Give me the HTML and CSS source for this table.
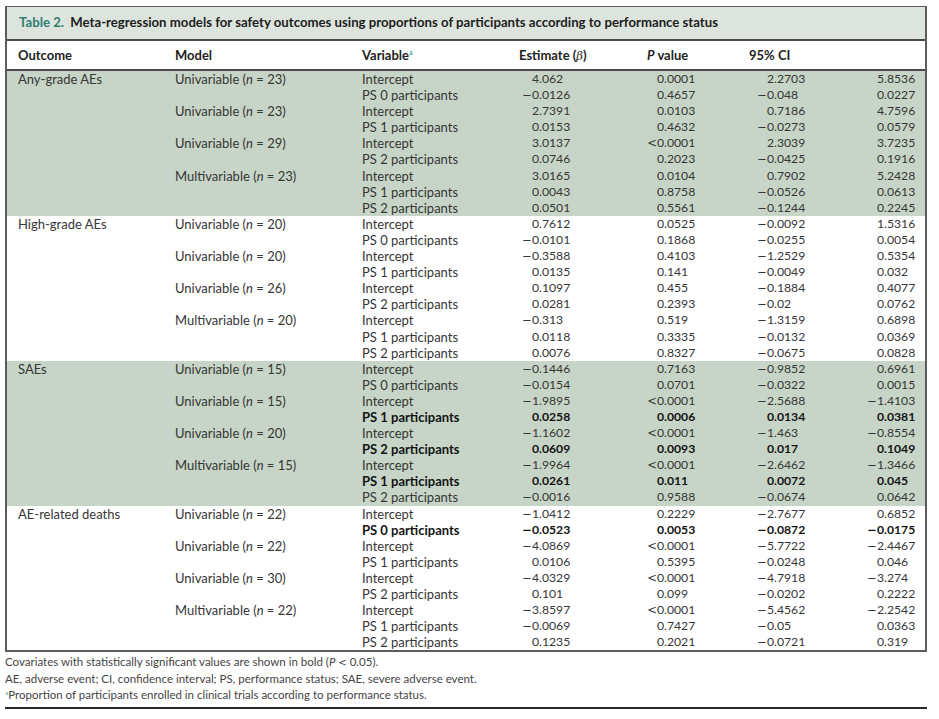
FILE: index.html
```html
<!DOCTYPE html>
<html>
<head>
<meta charset="utf-8">
<link rel="stylesheet" href="styles.css">
</head>
<body>
<div class="page">
  <div class="box">
    <div class="caption"><span class="lbl">Table 2.</span>&nbsp; Meta-regression models for safety outcomes using proportions of participants according to performance status</div>
    <table class="tbl">
      <colgroup>
        <col class="c1"><col class="c2"><col class="c3"><col class="c4"><col class="c5"><col class="c6"><col class="c7">
      </colgroup>
      <thead>
        <tr><th class="o">Outcome</th><th>Model</th><th>Variable<sup>a</sup></th><th>Estimate (<i class="beta">β</i>)</th><th><i>P</i> value</th><th>95% CI</th><th></th></tr>
      </thead>
      <tbody class="g">
        <tr><td class="o">Any-grade AEs</td><td>Univariable (<i>n</i> = 23)</td><td>Intercept</td><td class="e">4.062</td><td class="p">0.0001</td><td class="l">2.2703</td><td class="u">5.8536</td></tr>
        <tr><td></td><td></td><td>PS 0 participants</td><td class="e"><s>−</s>0.0126</td><td class="p">0.4657</td><td class="l"><s>−</s>0.048</td><td class="u">0.0227</td></tr>
        <tr><td></td><td>Univariable (<i>n</i> = 23)</td><td>Intercept</td><td class="e">2.7391</td><td class="p">0.0103</td><td class="l">0.7186</td><td class="u">4.7596</td></tr>
        <tr><td></td><td></td><td>PS 1 participants</td><td class="e">0.0153</td><td class="p">0.4632</td><td class="l"><s>−</s>0.0273</td><td class="u">0.0579</td></tr>
        <tr><td></td><td>Univariable (<i>n</i> = 29)</td><td>Intercept</td><td class="e">3.0137</td><td class="p"><s>&lt;</s>0.0001</td><td class="l">2.3039</td><td class="u">3.7235</td></tr>
        <tr><td></td><td></td><td>PS 2 participants</td><td class="e">0.0746</td><td class="p">0.2023</td><td class="l"><s>−</s>0.0425</td><td class="u">0.1916</td></tr>
        <tr><td></td><td>Multivariable (<i>n</i> = 23)</td><td>Intercept</td><td class="e">3.0165</td><td class="p">0.0104</td><td class="l">0.7902</td><td class="u">5.2428</td></tr>
        <tr><td></td><td></td><td>PS 1 participants</td><td class="e">0.0043</td><td class="p">0.8758</td><td class="l"><s>−</s>0.0526</td><td class="u">0.0613</td></tr>
        <tr><td></td><td></td><td>PS 2 participants</td><td class="e">0.0501</td><td class="p">0.5561</td><td class="l"><s>−</s>0.1244</td><td class="u">0.2245</td></tr>
      </tbody>
      <tbody class="w">
        <tr><td class="o">High-grade AEs</td><td>Univariable (<i>n</i> = 20)</td><td>Intercept</td><td class="e">0.7612</td><td class="p">0.0525</td><td class="l"><s>−</s>0.0092</td><td class="u">1.5316</td></tr>
        <tr><td></td><td></td><td>PS 0 participants</td><td class="e"><s>−</s>0.0101</td><td class="p">0.1868</td><td class="l"><s>−</s>0.0255</td><td class="u">0.0054</td></tr>
        <tr><td></td><td>Univariable (<i>n</i> = 20)</td><td>Intercept</td><td class="e"><s>−</s>0.3588</td><td class="p">0.4103</td><td class="l"><s>−</s>1.2529</td><td class="u">0.5354</td></tr>
        <tr><td></td><td></td><td>PS 1 participants</td><td class="e">0.0135</td><td class="p">0.141</td><td class="l"><s>−</s>0.0049</td><td class="u">0.032</td></tr>
        <tr><td></td><td>Univariable (<i>n</i> = 26)</td><td>Intercept</td><td class="e">0.1097</td><td class="p">0.455</td><td class="l"><s>−</s>0.1884</td><td class="u">0.4077</td></tr>
        <tr><td></td><td></td><td>PS 2 participants</td><td class="e">0.0281</td><td class="p">0.2393</td><td class="l"><s>−</s>0.02</td><td class="u">0.0762</td></tr>
        <tr><td></td><td>Multivariable (<i>n</i> = 20)</td><td>Intercept</td><td class="e"><s>−</s>0.313</td><td class="p">0.519</td><td class="l"><s>−</s>1.3159</td><td class="u">0.6898</td></tr>
        <tr><td></td><td></td><td>PS 1 participants</td><td class="e">0.0118</td><td class="p">0.3335</td><td class="l"><s>−</s>0.0132</td><td class="u">0.0369</td></tr>
        <tr><td></td><td></td><td>PS 2 participants</td><td class="e">0.0076</td><td class="p">0.8327</td><td class="l"><s>−</s>0.0675</td><td class="u">0.0828</td></tr>
      </tbody>
      <tbody class="g">
        <tr><td class="o">SAEs</td><td>Univariable (<i>n</i> = 15)</td><td>Intercept</td><td class="e"><s>−</s>0.1446</td><td class="p">0.7163</td><td class="l"><s>−</s>0.9852</td><td class="u">0.6961</td></tr>
        <tr><td></td><td></td><td>PS 0 participants</td><td class="e"><s>−</s>0.0154</td><td class="p">0.0701</td><td class="l"><s>−</s>0.0322</td><td class="u">0.0015</td></tr>
        <tr><td></td><td>Univariable (<i>n</i> = 15)</td><td>Intercept</td><td class="e"><s>−</s>1.9895</td><td class="p"><s>&lt;</s>0.0001</td><td class="l"><s>−</s>2.5688</td><td class="u"><s>−</s>1.4103</td></tr>
        <tr class="b"><td></td><td></td><td>PS 1 participants</td><td class="e">0.0258</td><td class="p">0.0006</td><td class="l">0.0134</td><td class="u">0.0381</td></tr>
        <tr><td></td><td>Univariable (<i>n</i> = 20)</td><td>Intercept</td><td class="e"><s>−</s>1.1602</td><td class="p"><s>&lt;</s>0.0001</td><td class="l"><s>−</s>1.463</td><td class="u"><s>−</s>0.8554</td></tr>
        <tr class="b"><td></td><td></td><td>PS 2 participants</td><td class="e">0.0609</td><td class="p">0.0093</td><td class="l">0.017</td><td class="u">0.1049</td></tr>
        <tr><td></td><td>Multivariable (<i>n</i> = 15)</td><td>Intercept</td><td class="e"><s>−</s>1.9964</td><td class="p"><s>&lt;</s>0.0001</td><td class="l"><s>−</s>2.6462</td><td class="u"><s>−</s>1.3466</td></tr>
        <tr class="b"><td></td><td></td><td>PS 1 participants</td><td class="e">0.0261</td><td class="p">0.011</td><td class="l">0.0072</td><td class="u">0.045</td></tr>
        <tr><td></td><td></td><td>PS 2 participants</td><td class="e"><s>−</s>0.0016</td><td class="p">0.9588</td><td class="l"><s>−</s>0.0674</td><td class="u">0.0642</td></tr>
      </tbody>
      <tbody class="w">
        <tr><td class="o">AE-related deaths</td><td>Univariable (<i>n</i> = 22)</td><td>Intercept</td><td class="e"><s>−</s>1.0412</td><td class="p">0.2229</td><td class="l"><s>−</s>2.7677</td><td class="u">0.6852</td></tr>
        <tr class="b"><td></td><td></td><td>PS 0 participants</td><td class="e"><s>−</s>0.0523</td><td class="p">0.0053</td><td class="l"><s>−</s>0.0872</td><td class="u"><s>−</s>0.0175</td></tr>
        <tr><td></td><td>Univariable (<i>n</i> = 22)</td><td>Intercept</td><td class="e"><s>−</s>4.0869</td><td class="p"><s>&lt;</s>0.0001</td><td class="l"><s>−</s>5.7722</td><td class="u"><s>−</s>2.4467</td></tr>
        <tr><td></td><td></td><td>PS 1 participants</td><td class="e">0.0106</td><td class="p">0.5395</td><td class="l"><s>−</s>0.0248</td><td class="u">0.046</td></tr>
        <tr><td></td><td>Univariable (<i>n</i> = 30)</td><td>Intercept</td><td class="e"><s>−</s>4.0329</td><td class="p"><s>&lt;</s>0.0001</td><td class="l"><s>−</s>4.7918</td><td class="u"><s>−</s>3.274</td></tr>
        <tr><td></td><td></td><td>PS 2 participants</td><td class="e">0.101</td><td class="p">0.099</td><td class="l"><s>−</s>0.0202</td><td class="u">0.2222</td></tr>
        <tr><td></td><td>Multivariable (<i>n</i> = 22)</td><td>Intercept</td><td class="e"><s>−</s>3.8597</td><td class="p"><s>&lt;</s>0.0001</td><td class="l"><s>−</s>5.4562</td><td class="u"><s>−</s>2.2542</td></tr>
        <tr><td></td><td></td><td>PS 1 participants</td><td class="e"><s>−</s>0.0069</td><td class="p">0.7427</td><td class="l"><s>−</s>0.05</td><td class="u">0.0363</td></tr>
        <tr><td></td><td></td><td>PS 2 participants</td><td class="e">0.1235</td><td class="p">0.2021</td><td class="l"><s>−</s>0.0721</td><td class="u">0.319</td></tr>
      </tbody>
    </table>
  </div>
  <div class="notes">
    <p>Covariates with statistically significant values are shown in bold (<i>P</i> <span class="lt">&lt;</span> 0.05).</p>
    <p>AE, adverse event; CI, confidence interval; PS, performance status; SAE, severe adverse event.</p>
    <p><sup>a</sup>Proportion of participants enrolled in clinical trials according to performance status.</p>
  </div>
  <div class="rule"></div>
</div>
</body>
</html>
```
FILE: styles.css
```css
html, body {
  margin: 0;
  padding: 0;
  background: #ffffff;
}
body {
  font-family: "Lato", "Liberation Sans", sans-serif;
  color: #363636;
}
.page {
  padding: 6px 0 0 5px;
  width: 922px;
}
.box {
  border: 2px solid #5c5c5c;
  border-top-width: 1.5px;
}
.caption {
  background: #dde4dd;
  height: 32px;
  line-height: 31px;
  padding-left: 12px;
  font-size: 13.2px;
  font-weight: 700;
  color: #1e1e1e;
  border-bottom: 2px solid #4a4a4a;
  white-space: nowrap;
}
.caption .lbl {
  color: #2f7f72;
}
.tbl {
  width: 918px;
  border-collapse: collapse;
  table-layout: fixed;
  font-size: 13px;
}
.c1 { width: 168px; }
.c2 { width: 187px; }
.c3 { width: 157px; }
.c4 { width: 128px; }
.c5 { width: 102px; }
.c6 { width: 118px; }
.c7 { width: 58px; }
.tbl th {
  text-align: left;
  font-weight: 700;
  font-size: 13px;
  color: #1e1e1e;
  height: 28px;
  padding: 0;
  border-bottom: 2px solid #4a4a4a;
  background: #ffffff;
  white-space: nowrap;
}
.tbl th sup {
  color: #3aa39a;
  font-size: 7px;
  vertical-align: 5px;
  line-height: 0;
}
.tbl th i.beta {
  font-family: "DejaVu Serif", serif;
  font-weight: 400;
  font-size: 11.5px;
  line-height: 10px;
}
.tbl td {
  padding: 0;
  height: 16.1px;
  line-height: 16.1px;
  white-space: nowrap;
  vertical-align: middle;
}
.tbl .o { padding-left: 11px; }
.tbl tbody.g { background: #c6d5c7; }
.tbl tbody.w { background: #ffffff; }
.tbl td.e, .tbl td.p, .tbl td.l, .tbl td.u {
  font-size: 12.2px;
}
.tbl td.e { padding-left: 13px; }
.tbl td.p { padding-left: 10px; }
.tbl td.l { padding-left: 18px; }
.tbl td.u { padding-left: 10px; }
.tbl td s {
  text-decoration: none;
  display: inline-block;
  width: 11px;
  margin-left: -11px;
  font-family: "DejaVu Sans", sans-serif;
  font-size: 11.5px;
  line-height: 10px;
  text-align: right;
}
.tbl tr.b td {
  font-weight: 700;
  color: #141414;
}
.notes {
  padding-top: 2px;
  font-size: 11.5px;
  color: #444444;
}
.notes p {
  margin: 0;
  height: 16.5px;
  line-height: 16.5px;
}
.notes .lt {
  font-family: "DejaVu Sans", sans-serif;
  font-size: 10px;
  line-height: 10px;
}
.notes sup {
  font-size: 6.5px;
  vertical-align: 4px;
  line-height: 0;
  color: #3aa39a;
}
.rule {
  margin-top: 3px;
  height: 2px;
  background: #2a2a2a;
}
```
